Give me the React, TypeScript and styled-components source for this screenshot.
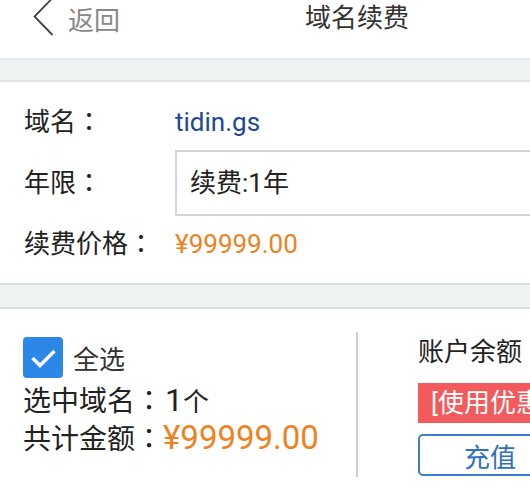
import styled, { createGlobalStyle } from 'styled-components'

const GlobalStyle = createGlobalStyle`
  html, body {
    margin: 0;
    padding: 0;
    overflow: hidden;
    background: #fff;
  }
  body {
    font-family: Roboto, "Noto Sans CJK SC", sans-serif;
    color: #222;
  }
`

const Page = styled.div`
  width: 712px;
`

const Header = styled.header`
  display: grid;
  grid-template-columns: 1fr auto 1fr;
  align-items: start;
  height: 58px;
  background: #fff;
  box-shadow: 0 1px 2px rgba(0, 0, 0, 0.06);
  position: relative;
  z-index: 1;
`

const BackLink = styled.a`
  display: flex;
  align-items: center;
  height: 36px;
  padding-left: 33px;
  color: #888;
  font-size: 26px;
  text-decoration: none;

  svg {
    margin-right: 14px;
    margin-top: -3px;
  }
`

const Title = styled.h1`
  margin: 0 0 0 2px;
  font-size: 26px;
  font-weight: 400;
  line-height: 36px;
  color: #333;
`

const Band = styled.div<{ $edge?: boolean }>`
  height: 22px;
  background: #eff2f3;
  border-top: ${p => (p.$edge ? '2px solid #e0e0e0' : 'none')};
  border-bottom: 2px solid #e0e0e0;
`

const InfoSection = styled.section`
  display: grid;
  grid-template-columns: 151px 1fr;
  row-gap: 11px;
  align-items: center;
  padding: 23px 24px 22px;
  font-size: 26px;
  line-height: 34px;
`

const Label = styled.div`
  color: #222;
  white-space: nowrap;
`

// full-width colon sits centred in its cell, as in the original font
const Colon = styled.span`
  font-family: "Noto Sans CJK TC", sans-serif;
  line-height: 0;
`

const DomainName = styled.div`
  color: #1f4699;
`

const Price = styled.span<{ $big?: boolean }>`
  color: #ef8220;
  font-size: ${p => (p.$big ? '33px' : '26px')};
`

const Select = styled.div`
  height: 62px;
  border: 2px solid #d4d4d4;
  display: flex;
  align-items: center;
  padding-left: 13px;
  font-size: 26px;
  color: #222;
`

const Summary = styled.section`
  display: flex;
  padding-top: 23px;
`

const SummaryLeft = styled.div`
  box-sizing: border-box;
  width: 358px;
  height: 145px;
  padding: 5px 0 0 23px;
  border-right: 2px solid #cfcfcf;
`

const CheckRow = styled.label`
  display: flex;
  align-items: center;
  gap: 10px;
  height: 41px;
  font-size: 26px;
  color: #333;
`

const CheckBox = styled.span`
  display: flex;
  align-items: center;
  justify-content: center;
  width: 40px;
  height: 41px;
  border-radius: 4px;
  background: #2b87e8;
`

const SumRow = styled.div`
  display: flex;
  align-items: baseline;
  height: 38px;
  font-size: 28px;
  line-height: 38px;
  color: #222;
  white-space: nowrap;

  &:first-of-type {
    margin-top: 3px;
  }
`

const Count = styled.span`
  font-size: 32px;
  margin-left: 2px;
`

const Unit = styled.span`
  font-size: 26px;
`

const SummaryRight = styled.div`
  padding-left: 60px;
  display: flex;
  flex-direction: column;
  align-items: flex-start;
`

const BalanceTitle = styled.div`
  font-size: 26px;
  line-height: 40px;
  color: #222;
`

const CouponBar = styled.div`
  margin-top: 11px;
  height: 40px;
  line-height: 40px;
  padding: 0 12px 0 13px;
  background: #f25a5b;
  color: #fff;
  font-size: 26px;
  white-space: nowrap;
`

const RechargeButton = styled.button`
  margin-top: 11px;
  width: 144px;
  height: 42px;
  border: 2px solid #3b7dd1;
  border-radius: 5px;
  background: #fff;
  color: #2f6fc0;
  font-family: inherit;
  font-size: 26px;
  padding: 0;
`

export default function App() {
  return (
    <Page>
      <GlobalStyle />
      <Header>
        <BackLink>
          <svg width="21" height="40" viewBox="0 0 21 40">
            <polyline points="19.5,1 1.5,19.5 19.5,38" fill="none" stroke="#444" strokeWidth="1.8" />
          </svg>
          返回
        </BackLink>
        <Title>域名续费</Title>
        <div />
      </Header>
      <Band />

      <InfoSection>
        <Label>域名<Colon>：</Colon></Label>
        <DomainName>tidin.gs</DomainName>
        <Label>年限<Colon>：</Colon></Label>
        <Select>续费:1年</Select>
        <Label>续费价格<Colon>：</Colon></Label>
        <div>
          <Price>¥99999.00</Price>
        </div>
      </InfoSection>
      <Band $edge />

      <Summary>
        <SummaryLeft>
          <CheckRow>
            <CheckBox>
              <svg width="26" height="20" viewBox="0 0 26 20">
                <polyline points="2.5,10 10,17.5 24.5,3" fill="none" stroke="#fff" strokeWidth="3.5" />
              </svg>
            </CheckBox>
            全选
          </CheckRow>
          <SumRow>
            选中域名<Colon>：</Colon><Count>1</Count>
            <Unit>个</Unit>
          </SumRow>
          <SumRow>
            共计金额<Colon>：</Colon><Price $big>¥99999.00</Price>
          </SumRow>
        </SummaryLeft>
        <SummaryRight>
          <BalanceTitle>账户余额</BalanceTitle>
          <CouponBar>[使用优惠券]</CouponBar>
          <RechargeButton>充值</RechargeButton>
        </SummaryRight>
      </Summary>
    </Page>
  )
}
